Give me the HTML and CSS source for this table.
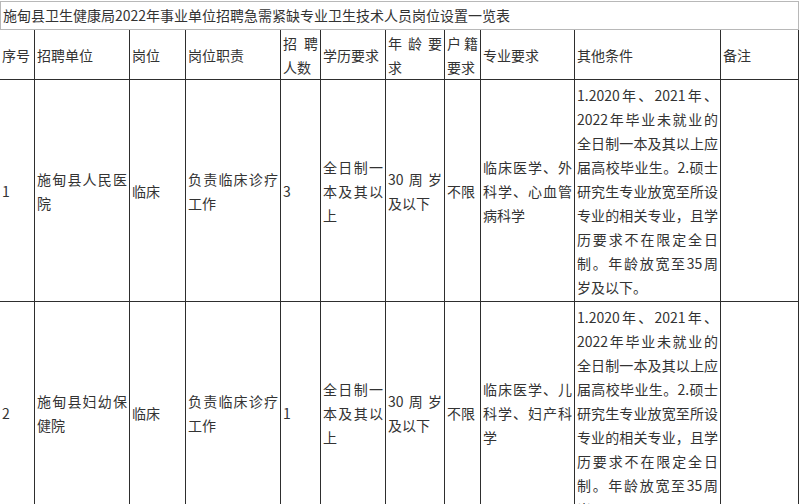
FILE: index.html
```html
<!DOCTYPE html>
<html lang="zh-CN">
<head>
<meta charset="utf-8">
<title>施甸县卫生健康局2022年事业单位招聘急需紧缺专业卫生技术人员岗位设置一览表</title>
<link rel="stylesheet" href="styles.css">
</head>
<body>
<div class="page">
  <div class="title">施甸县卫生健康局2022年事业单位招聘急需紧缺专业卫生技术人员岗位设置一览表</div>
  <div class="grid">
    <div class="cell head"><span>序号</span></div>
    <div class="cell head"><span>招聘单位</span></div>
    <div class="cell head"><span>岗位</span></div>
    <div class="cell head"><span>岗位职责</span></div>
    <div class="cell head"><span>招聘人数</span></div>
    <div class="cell head"><span>学历要求</span></div>
    <div class="cell head"><span>年龄要求</span></div>
    <div class="cell head"><span>户籍要求</span></div>
    <div class="cell head"><span>专业要求</span></div>
    <div class="cell head"><span>其他条件</span></div>
    <div class="cell head"><span>备注</span></div>

    <div class="cell"><span>1</span></div>
    <div class="cell"><span>施甸县人民医院</span></div>
    <div class="cell"><span>临床</span></div>
    <div class="cell"><span>负责临床诊疗工作</span></div>
    <div class="cell"><span>3</span></div>
    <div class="cell"><span>全日制一本及其以上</span></div>
    <div class="cell"><span>30周岁及以下</span></div>
    <div class="cell"><span>不限</span></div>
    <div class="cell"><span>临床医学、外科学、心血管病科学</span></div>
    <div class="cell"><span>1.2020年、2021年、2022年毕业未就业的全日制一本及其以上应届高校毕业生。2.硕士研究生专业放宽至所设专业的相关专业，且学历要求不在限定全日制。年龄放宽至35周岁及以下。</span></div>
    <div class="cell"><span></span></div>

    <div class="cell"><span>2</span></div>
    <div class="cell"><span>施甸县妇幼保健院</span></div>
    <div class="cell"><span>临床</span></div>
    <div class="cell"><span>负责临床诊疗工作</span></div>
    <div class="cell"><span>1</span></div>
    <div class="cell"><span>全日制一本及其以上</span></div>
    <div class="cell"><span>30周岁及以下</span></div>
    <div class="cell"><span>不限</span></div>
    <div class="cell"><span>临床医学、儿科学、妇产科学</span></div>
    <div class="cell"><span>1.2020年、2021年、2022年毕业未就业的全日制一本及其以上应届高校毕业生。2.硕士研究生专业放宽至所设专业的相关专业，且学历要求不在限定全日制。年龄放宽至35周岁及以下。</span></div>
    <div class="cell"><span></span></div>
  </div>
</div>
</body>
</html>
```
FILE: styles.css
```css
html, body {
  margin: 0;
  padding: 0;
  background: #ffffff;
}
body {
  font-family: "Noto Sans CJK SC", "Noto Sans", sans-serif;
  font-size: 14px;
  line-height: 24px;
  color: #333333;
}
.page {
  padding-top: 1px;
  width: 799px;
}
.title {
  box-sizing: border-box;
  width: 799px;
  border: 1px solid #b8b8b8;
  padding: 1px 2px 2px 2px;
  white-space: nowrap;
}
.grid {
  display: grid;
  grid-template-columns: 35px 95px 56px 95px 40px 65px 59px 36px 94px 146px 78px;
}
.cell {
  box-sizing: border-box;
  display: flex;
  align-items: center;
  border-right: 1px solid #2e2e2e;
  border-bottom: 1px solid #2e2e2e;
  padding: 3px 2px 2px 2px;
  min-width: 0;
}
.cell > span {
  flex: 1 1 auto;
  min-width: 0;
  text-align: justify;
  line-break: strict;
}
.head {
  padding: 1px 2px 0 2px;
}
```
